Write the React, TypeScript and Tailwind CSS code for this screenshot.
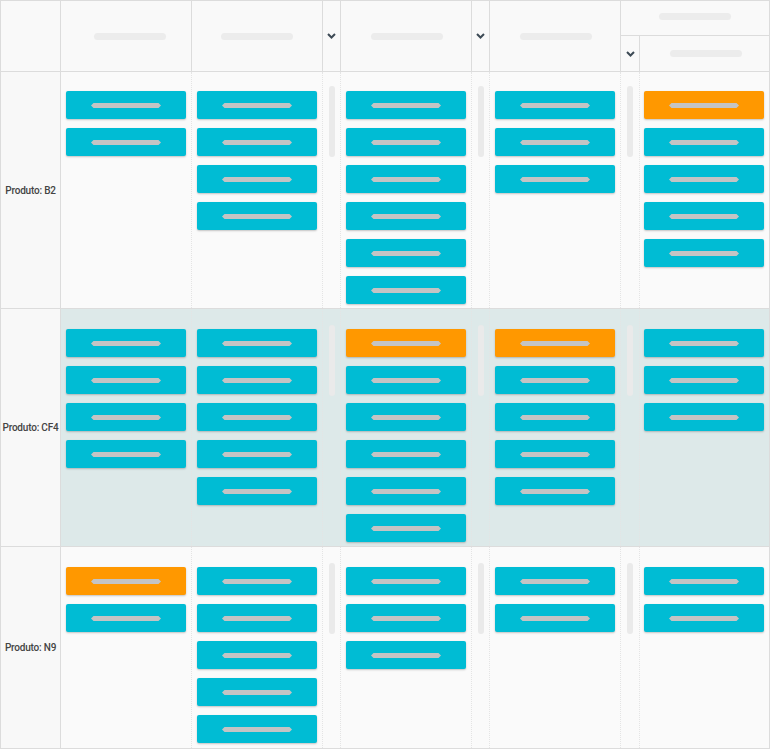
// Grade de produtos — colunas com cards, colunas recolhidas e linha destacada

type Card = 'c' | 'o'

const rows: { label: string; h: string; pt: string; highlight?: boolean; last?: boolean; bar: string; cols: Card[][] }[] = [
  {
    label: 'Produto: B2',
    h: 'h-[237px]',
    pt: 'pt-[19px]',
    bar: 'mt-[14px]',
    cols: [
      ['c', 'c'],
      ['c', 'c', 'c', 'c'],
      ['c', 'c', 'c', 'c', 'c', 'c'],
      ['c', 'c', 'c'],
      ['o', 'c', 'c', 'c', 'c'],
    ],
  },
  {
    label: 'Produto: CF4',
    h: 'h-[238px]',
    pt: 'pt-5',
    highlight: true,
    bar: 'mt-4',
    cols: [
      ['c', 'c', 'c', 'c'],
      ['c', 'c', 'c', 'c', 'c'],
      ['o', 'c', 'c', 'c', 'c', 'c'],
      ['o', 'c', 'c', 'c', 'c'],
      ['c', 'c', 'c'],
    ],
  },
  {
    label: 'Produto: N9',
    h: 'flex-1',
    pt: 'pt-5',
    last: true,
    bar: 'mt-4',
    cols: [
      ['o', 'c'],
      ['c', 'c', 'c', 'c', 'c'],
      ['c', 'c', 'c'],
      ['c', 'c'],
      ['c', 'c'],
    ],
  },
]

// largura de cada coluna (inclui a borda direita)
const colWidths = ['w-[131px]', 'w-[131px]', 'w-[131px]', 'w-[131px]', 'w-[129px] pr-[2px]']
// coluna recolhida que vem depois da coluna de índice i
const collapsedAfter: Record<number, string> = { 1: 'w-[18px]', 2: 'w-[18px]', 3: 'w-[19px]' }

function Chevron() {
  return (
    <svg width="9" height="6" viewBox="0 0 9 6" className="block">
      <polyline points="1,1 4.5,4.5 8,1" fill="none" stroke="#3d4a55" strokeWidth="2" />
    </svg>
  )
}

function Pill() {
  return <div className="h-[7px] w-[72px] rounded-full bg-[#ececec]" />
}

function CardBar() {
  return (
    <svg width="70" height="5" viewBox="0 0 70 5" className="block">
      <polygon points="0,2.5 2.5,0 67.5,0 70,2.5 67.5,5 2.5,5" fill="#c4c4c4" />
    </svg>
  )
}

function KanbanCard({ kind }: { kind: Card }) {
  return (
    <div
      className={`flex h-[28px] w-[120px] items-center justify-center rounded-[2px] shadow-[0_1px_2px_rgba(0,0,0,0.22)] ${
        kind === 'o' ? 'bg-[#ff9800]' : 'bg-[#00bcd4]'
      }`}
    >
      <CardBar />
    </div>
  )
}

export default function App() {
  return (
    <div
      className="box-border flex h-[749px] w-[770px] flex-col overflow-hidden border border-[#dcdcdc] bg-[#fafafa]"
      style={{ fontFamily: 'Roboto, "Liberation Sans", sans-serif' }}
    >
      {/* ── cabeçalho ── */}
      <div className="flex h-[71px] shrink-0 border-b border-[#dcdcdc] bg-[#f9f9f9]">
        <div className="w-[60px] shrink-0 border-r border-[#dcdcdc]" />
        <div className="flex w-[131px] shrink-0 items-center justify-center border-r border-[#dcdcdc] pl-2 pt-[1px]">
          <Pill />
        </div>
        <div className="flex w-[131px] shrink-0 items-center justify-center border-r border-[#dcdcdc] pt-[1px]">
          <Pill />
        </div>
        <div className="flex w-[18px] shrink-0 items-center justify-center border-r border-[#dcdcdc]">
          <Chevron />
        </div>
        <div className="flex w-[131px] shrink-0 items-center justify-center border-r border-[#dcdcdc] pl-[2px] pt-[1px]">
          <Pill />
        </div>
        <div className="flex w-[18px] shrink-0 items-center justify-center border-r border-[#dcdcdc]">
          <Chevron />
        </div>
        <div className="flex w-[131px] shrink-0 items-center justify-center border-r border-[#dcdcdc] pl-[2px] pt-[1px]">
          <Pill />
        </div>
        {/* grupo com subcolunas */}
        <div className="flex w-[148px] shrink-0 flex-col">
          <div className="flex h-[35px] items-center justify-center border-b border-[#dcdcdc] pb-[3px]">
            <Pill />
          </div>
          <div className="flex flex-1">
            <div className="flex w-[19px] shrink-0 items-center justify-center border-r border-[#dcdcdc]">
              <Chevron />
            </div>
            <div className="flex flex-1 items-center justify-center pl-[3px]">
              <Pill />
            </div>
          </div>
        </div>
      </div>

      {/* ── linhas ── */}
      {rows.map((row) => (
        <div
          key={row.label}
          className={`flex ${row.h} ${row.last ? '' : 'shrink-0 border-b border-[#dcdcdc]'}`}
        >
          <div className="flex w-[60px] shrink-0 items-center justify-center border-r border-[#dcdcdc] bg-[#f8f8f8]">
            <span className="whitespace-nowrap text-[10px] font-medium tracking-[-0.2px] text-[#444]">
              {row.label}
            </span>
          </div>
          <div className={`flex flex-1 ${row.highlight ? 'bg-[#dde9e9]' : ''}`}>
            {row.cols.map((cards, i) => (
              <div key={i} className="contents">
                <div
                  className={`${colWidths[i]} ${row.pt} flex shrink-0 flex-col items-center gap-[9px] ${
                    i < 4 ? 'border-r border-dotted border-[#e4e4e4]' : ''
                  }`}
                >
                  {cards.map((k, j) => (
                    <KanbanCard key={j} kind={k} />
                  ))}
                </div>
                {collapsedAfter[i] && (
                  <div
                    className={`${collapsedAfter[i]} flex shrink-0 justify-center border-r border-dotted border-[#e4e4e4]`}
                  >
                    <div className={`${row.bar} h-[71px] w-[6px] rounded-full bg-[#eaeaea]`} />
                  </div>
                )}
              </div>
            ))}
          </div>
        </div>
      ))}
    </div>
  )
}
